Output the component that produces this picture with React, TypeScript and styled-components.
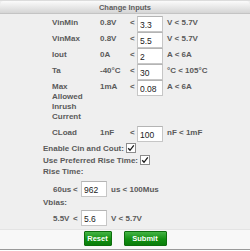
import React from "react";
import styled, { createGlobalStyle } from "styled-components";

const GlobalStyle = createGlobalStyle`
  body {
    margin: 0;
    background: #ffffff;
  }
`;

type Range = {
  label: string;
  min: string;
  value: string;
  max: string;
};

const ranges: Range[] = [
  { label: "VinMin", min: "0.8V", value: "3.3", max: "V < 5.7V" },
  { label: "VinMax", min: "0.8V", value: "5.5", max: "V < 5.7V" },
  { label: "Iout", min: "0A", value: "2", max: "A < 6A" },
  { label: "Ta", min: "-40°C", value: "30", max: "°C < 105°C" },
  { label: "Max Allowed Inrush Current", min: "1mA", value: "0.08", max: "A < 6A" },
  { label: "CLoad", min: "1nF", value: "100", max: "nF < 1mF" },
];

const App = () => {
  return (
    <>
      <GlobalStyle />
      <Panel>
        <Header>Change Inputs</Header>
        <Body>
          <RangeGrid>
            {ranges.map((r) => (
              <React.Fragment key={r.label}>
                <Cell>{r.label}</Cell>
                <Cell>{r.min}</Cell>
                <Cell>&lt;</Cell>
                <Field defaultValue={r.value} />
                <Cell $indent>{r.max}</Cell>
              </React.Fragment>
            ))}
          </RangeGrid>

          <CheckRow>
            Enable Cin and Cout:
            <CheckBox>
              <Tick />
            </CheckBox>
          </CheckRow>
          <CheckRow>
            Use Preferred Rise Time:
            <CheckBox>
              <Tick />
            </CheckBox>
          </CheckRow>

          <SectionTitle>Rise Time:</SectionTitle>
          <InlineRange $top={3}>
            <MinText>60us</MinText>
            <Less>&lt;</Less>
            <Field defaultValue="962" />
            <MaxText>us &lt; 100Mus</MaxText>
          </InlineRange>

          <SectionTitle>Vbias:</SectionTitle>
          <InlineRange $top={1}>
            <MinText>5.5V</MinText>
            <Less>&lt;</Less>
            <Field defaultValue="5.6" />
            <MaxText>V &lt; 5.7V</MaxText>
          </InlineRange>
        </Body>
        <Footer>
          <Button $width={28}>Reset</Button>
          <Button $width={43}>Submit</Button>
        </Footer>
      </Panel>
    </>
  );
};

const Tick = () => (
  <svg width="8" height="8" viewBox="0 0 8 8" fill="none">
    <path d="M1.2 4.3 L3 6.3 L6.8 1.4" stroke="#1a1a1a" strokeWidth="1.3" />
  </svg>
);

export default App;

const Panel = styled.div`
  width: 250px;
  height: 250px;
  box-sizing: border-box;
  display: flex;
  flex-direction: column;
  background: #efefef;
  border-top: 1px solid #dcdcdc;
  border-bottom: 1px solid #9a9a9a;
  font-family: "Liberation Sans", Arial, sans-serif;
  font-size: 8px;
  font-weight: bold;
  color: #5a5a5a;
`;

const Header = styled.div`
  height: 13px;
  line-height: 13px;
  text-align: center;
  font-size: 7.5px;
  color: #5c5c5c;
  background: linear-gradient(#fbfbfb, #d2d2d2);
  border-radius: 4px 4px 0 0;
  box-shadow: inset 0 -1px 0 #c4c4c4;
`;

const Body = styled.div`
  flex: 1;
  padding: 2px 0 0 43px;
`;

const RangeGrid = styled.div`
  display: grid;
  grid-template-columns: 48px 30px 7px 26px auto;
  margin-left: 9px;
  align-items: start;
`;

const Cell = styled.div<{ $indent?: boolean }>`
  padding: 2px 0 4px ${(p) => (p.$indent ? "4px" : "0")};
  line-height: 10px;
  white-space: ${(p) => (p.$indent ? "nowrap" : "normal")};
`;

const Field = styled.input`
  width: 26px;
  height: 16px;
  box-sizing: border-box;
  margin: 0;
  padding: 1px 0 0 2px;
  border: 1px solid #c6c6c6;
  border-top-color: #b4b4b4;
  background: #ffffff;
  font-family: "Liberation Sans", Arial, sans-serif;
  font-size: 8.5px;
  color: #222222;
  outline: none;
`;

const CheckRow = styled.div`
  height: 12px;
  display: flex;
  align-items: center;
  gap: 2px;
`;

const CheckBox = styled.span`
  width: 10px;
  height: 10px;
  box-sizing: border-box;
  display: flex;
  align-items: center;
  justify-content: center;
  background: #ffffff;
  border: 1px solid #8c8c8c;
`;

const SectionTitle = styled.div`
  height: 12px;
  line-height: 12px;
`;

const InlineRange = styled.div<{ $top: number }>`
  height: 16px;
  margin-top: ${(p) => p.$top}px;
  margin-left: 10px;
  display: flex;
  align-items: center;
`;

const MinText = styled.span`
  width: 20px;
  white-space: nowrap;
`;

const Less = styled.span`
  width: 8px;
`;

const MaxText = styled.span`
  margin-left: 4px;
`;

const Footer = styled.div`
  height: 20px;
  box-sizing: border-box;
  display: flex;
  justify-content: center;
  align-items: flex-start;
  gap: 12px;
  padding-top: 1px;
  background: #f8f8f8;
  border-top: 1px solid #e4e4e4;
`;

const Button = styled.button<{ $width: number }>`
  width: ${(p) => p.$width}px;
  height: 15px;
  margin: 0;
  padding: 0;
  border: 1px solid #0d6e0d;
  border-radius: 1px;
  background: linear-gradient(#45b445, #129012 55%, #0a7d0a);
  color: #ffffff;
  font-family: "Liberation Sans", Arial, sans-serif;
  font-size: 7.5px;
  font-weight: bold;
  cursor: pointer;
`;
